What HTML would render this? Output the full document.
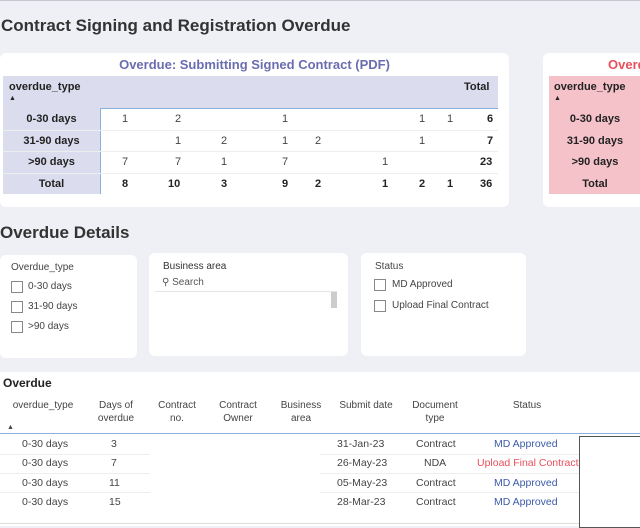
<!DOCTYPE html><html><head><style>
body{margin:0;width:640px;height:526px;background:#eff0f6;font-family:"Liberation Sans",sans-serif;position:relative;overflow:hidden;color:#252423}
.a{position:absolute;white-space:nowrap}
.card{position:absolute;background:#fff;border-radius:6px}
.t{position:absolute;font-size:11px;white-space:nowrap}
.b{font-weight:bold;color:#222}
.cb{position:absolute;width:10px;height:10px;border:1px solid #888;background:#fff}
</style></head><body>
<div class="a" style="left:0;top:0;width:640px;height:1px;background:#c8c8d0"></div>
<div class="t" style="left:1px;top:16px;font-size:17px;font-weight:bold;color:#333">Contract Signing and Registration Overdue</div>

<div class="card" style="left:0;top:53px;width:509px;height:154px"></div>
<div class="t" style="left:0;width:509px;top:57px;text-align:center;font-size:13px;font-weight:bold;color:#6a6db0">Overdue: Submitting Signed Contract (PDF)</div>
<div class="a" style="left:3px;top:76px;width:495px;height:32px;background:#dcdcef;border-bottom:1px solid #8ab0e0"></div>
<div class="t b" style="left:9px;top:81px">overdue_type</div>
<div class="t" style="left:9px;top:95px;font-size:7px">▲</div>
<div class="t b" style="left:464px;top:81px">Total</div>
<div class="a" style="left:3px;top:108px;width:97px;height:86px;background:#dcdcef;border-right:1px solid #8ab0e0"></div>
<div class="a" style="left:3px;top:130px;width:495px;height:1px;background:#eee"></div>
<div class="a" style="left:3px;top:151px;width:495px;height:1px;background:#eee"></div>
<div class="a" style="left:3px;top:173px;width:495px;height:1px;background:#eee"></div>
<div class="t b" style="left:3px;width:97px;text-align:center;top:113px">0-30 days</div>
<div class="t b" style="left:3px;width:97px;text-align:center;top:135px">31-90 days</div>
<div class="t b" style="left:3px;width:97px;text-align:center;top:156px">>90 days</div>
<div class="t b" style="left:3px;width:97px;text-align:center;top:178px">Total</div>
<div class="t" style="left:0;top:113px;color:#444"><span class="a" style="left:122px">1</span><span class="a" style="left:175px">2</span><span class="a" style="left:282px">1</span><span class="a" style="left:419px">1</span><span class="a" style="left:447px">1</span><span class="a b" style="left:487px">6</span></div>
<div class="t" style="left:0;top:135px;color:#444"><span class="a" style="left:175px">1</span><span class="a" style="left:221px">2</span><span class="a" style="left:282px">1</span><span class="a" style="left:315px">2</span><span class="a" style="left:419px">1</span><span class="a b" style="left:487px">7</span></div>
<div class="t" style="left:0;top:156px;color:#444"><span class="a" style="left:122px">7</span><span class="a" style="left:175px">7</span><span class="a" style="left:221px">1</span><span class="a" style="left:282px">7</span><span class="a" style="left:382px">1</span><span class="a b" style="left:480px">23</span></div>
<div class="t b" style="left:0;top:178px"><span class="a" style="left:122px">8</span><span class="a" style="left:168px">10</span><span class="a" style="left:221px">3</span><span class="a" style="left:282px">9</span><span class="a" style="left:315px">2</span><span class="a" style="left:382px">1</span><span class="a" style="left:419px">2</span><span class="a" style="left:447px">1</span><span class="a" style="left:480px">36</span></div>

<div class="card" style="left:543px;top:53px;width:110px;height:154px"></div>
<div class="t" style="left:608px;top:57px;font-size:13px;font-weight:bold;color:#e8505b">Overdue</div>
<div class="a" style="left:549px;top:76px;width:91px;height:32px;background:#f5c2c9;border-bottom:1px solid #8ab0e0"></div>
<div class="t b" style="left:554px;top:81px">overdue_type</div>
<div class="t" style="left:554px;top:95px;font-size:7px">▲</div>
<div class="a" style="left:549px;top:108px;width:91px;height:86px;background:#f5c2c9"></div>
<div class="t b" style="left:549px;width:92px;text-align:center;top:113px">0-30 days</div>
<div class="t b" style="left:549px;width:92px;text-align:center;top:135px">31-90 days</div>
<div class="t b" style="left:549px;width:92px;text-align:center;top:156px">>90 days</div>
<div class="t b" style="left:549px;width:92px;text-align:center;top:178px">Total</div>

<div class="t" style="left:0;top:223px;font-size:17px;font-weight:bold;color:#333">Overdue Details</div>
<div class="card" style="left:0;top:255px;width:137px;height:103px"></div>
<div class="t" style="left:11px;top:262px;font-size:10px;color:#444">Overdue_type</div>
<div class="cb" style="left:11px;top:281px"></div><div class="t" style="left:28px;top:281px;font-size:10px;color:#444">0-30 days</div>
<div class="cb" style="left:11px;top:301px"></div><div class="t" style="left:28px;top:301px;font-size:10px;color:#444">31-90 days</div>
<div class="cb" style="left:11px;top:321px"></div><div class="t" style="left:28px;top:321px;font-size:10px;color:#444">>90 days</div>
<div class="card" style="left:149px;top:253px;width:199px;height:103px"></div>
<div class="t" style="left:163px;top:261px;font-size:10px;color:#333">Business area</div>
<div class="t" style="left:162px;top:277px;font-size:10px;color:#555">⚲ Search</div>
<div class="a" style="left:155px;top:291px;width:182px;height:1px;background:#e4e4e4"></div>
<div class="a" style="left:331px;top:292px;width:6px;height:16px;background:#ccc"></div>
<div class="card" style="left:361px;top:253px;width:165px;height:103px"></div>
<div class="t" style="left:375px;top:261px;font-size:10px;color:#444">Status</div>
<div class="cb" style="left:374px;top:279px"></div><div class="t" style="left:392px;top:279px;font-size:10px;color:#444">MD Approved</div>
<div class="cb" style="left:374px;top:300px"></div><div class="t" style="left:392px;top:300px;font-size:10px;color:#444">Upload Final Contract</div>

<div class="a" style="left:0;top:372px;width:640px;height:154px;background:#fff"></div>
<div class="t" style="left:3px;top:376px;font-size:12px;font-weight:bold;color:#222">Overdue</div>
<div style="position:absolute;top:399px;left:0;font-size:10px;color:#444;line-height:13px">
<div class="a" style="left:0;width:86px;text-align:center">overdue_type</div>
<div class="a" style="left:85px;width:62px;text-align:center">Days of<br>overdue</div>
<div class="a" style="left:148px;width:58px;text-align:center">Contract<br>no.</div>
<div class="a" style="left:208px;width:60px;text-align:center">Contract<br>Owner</div>
<div class="a" style="left:271px;width:60px;text-align:center">Business<br>area</div>
<div class="a" style="left:331px;width:70px;text-align:center">Submit date</div>
<div class="a" style="left:402px;width:66px;text-align:center">Document<br>type</div>
<div class="a" style="left:472px;width:110px;text-align:center">Status</div>
<div class="a" style="left:7px;top:22px;font-size:7px">▲</div>
</div>
<div class="a" style="left:0;top:433px;width:640px;height:1px;background:#8ab0e0"></div>
<div class="a" style="left:579px;top:436px;width:61px;height:90px;border:1px solid #555;border-right:none;background:#fff"></div>
<div style="position:absolute;left:0;top:438px;font-size:10.5px;color:#444;width:640px">
<div class="a" style="top:0;left:22px">0-30 days</div><div class="a" style="top:0;left:111px">3</div><div class="a" style="top:0;left:337px">31-Jan-23</div><div class="a" style="top:0;left:416px">Contract</div><div class="a" style="top:0;left:494px;color:#3b5bab">MD Approved</div>
<div class="a" style="top:19px;left:22px">0-30 days</div><div class="a" style="top:19px;left:111px">7</div><div class="a" style="top:19px;left:337px">26-May-23</div><div class="a" style="top:19px;left:424px">NDA</div><div class="a" style="top:19px;left:477px;color:#e8505b">Upload Final Contract</div>
<div class="a" style="top:39px;left:22px">0-30 days</div><div class="a" style="top:39px;left:109px">11</div><div class="a" style="top:39px;left:337px">05-May-23</div><div class="a" style="top:39px;left:416px">Contract</div><div class="a" style="top:39px;left:494px;color:#3b5bab">MD Approved</div>
<div class="a" style="top:58px;left:22px">0-30 days</div><div class="a" style="top:58px;left:109px">15</div><div class="a" style="top:58px;left:337px">28-Mar-23</div><div class="a" style="top:58px;left:416px">Contract</div><div class="a" style="top:58px;left:494px;color:#3b5bab">MD Approved</div>
</div>
<div class="a" style="left:0;top:454px;width:150px;height:1px;background:#eee"></div>
<div class="a" style="left:320px;top:454px;width:259px;height:1px;background:#eee"></div>
<div class="a" style="left:0;top:473px;width:150px;height:1px;background:#eee"></div>
<div class="a" style="left:320px;top:473px;width:259px;height:1px;background:#eee"></div>
<div class="a" style="left:0;top:492px;width:150px;height:1px;background:#eee"></div>
<div class="a" style="left:320px;top:492px;width:259px;height:1px;background:#eee"></div>
<div class="a" style="left:0;top:523px;width:579px;height:1px;background:#ddd"></div>
</body></html>
